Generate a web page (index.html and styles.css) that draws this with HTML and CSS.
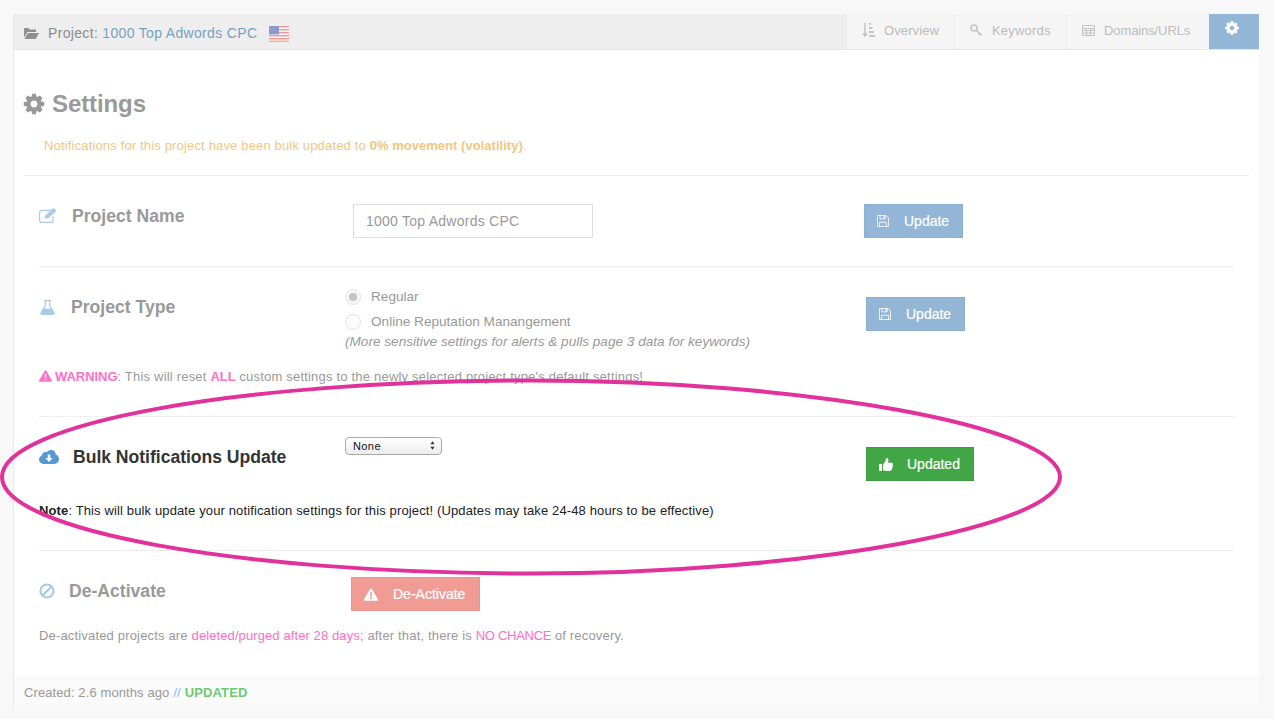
FILE: index.html
```html
<!DOCTYPE html>
<html lang="en">
<head>
<meta charset="utf-8">
<title>Project Settings</title>
<link rel="stylesheet" href="styles.css">
</head>
<body>
<svg class="defs" width="0" height="0" aria-hidden="true">
  <symbol id="i-cog" viewBox="0 0 1792 1792"><path fill-rule="evenodd" d="M1152 896q0-106-75-181t-181-75-181 75-75 181 75 181 181 75 181-75 75-181zm512-109v222q0 12-8 23t-20 13l-185 28q-19 54-39 91 35 50 107 138 10 12 10 25t-9 23q-27 37-99 108t-94 71q-12 0-26-9l-138-108q-44 23-91 38-16 136-29 186-7 28-36 28h-222q-14 0-24.500-8.500t-11.500-21.500l-28-184q-49-16-90-37l-141 107q-10 9-25 9-14 0-25-11-126-114-165-168-7-10-7-23 0-12 8-23 15-21 51-66.500t54-70.500q-27-50-41-99l-183-27q-13-2-21-12.500t-8-23.500v-222q0-12 8-23t19-13l186-28q14-46 39-92-40-57-107-138-10-12-10-24 0-10 9-23 26-36 98.500-107.500t94.500-71.500q13 0 26 10l138 107q44-23 91-38 16-136 29-186 7-28 36-28h222q14 0 24.500 8.500t11.500 21.500l28 184q49 16 90 37l142-107q9-9 24-9 13 0 25 10 129 119 165 170 7 8 7 22 0 12-8 23-15 21-51 66.500t-54 70.500q26 50 41 98l183 28q13 2 21 12.500t8 23.500z"/></symbol>
  <symbol id="i-warn" viewBox="0 0 16 14"><path fill-rule="evenodd" d="M8 0c.4 0 .7.2.9.5l7 12c.4.7-.1 1.500-.9 1.500H1c-.8 0-1.300-.8-.9-1.500l7-12C7.300.2 7.600 0 8 0zM7 4.500l.2 5h1.600l.2-5H7zM7 10.500V12.300h2V10.500H7z"/></symbol>
  <symbol id="i-save" viewBox="0 0 14 14"><path fill="none" stroke="currentColor" d="M.5.5h10l3 3v10H.5z"/><path fill="none" stroke="currentColor" d="M3.500.5v4h6v-4M3 13.500v-5h8v5"/><path fill="currentColor" d="M7.500 1.200h1.300v2.500H7.500z"/></symbol>
</svg>

<div class="panel">
  <header class="topbar">
    <div class="crumb">
      <svg class="ico-folder" viewBox="0 0 15 11" width="15" height="11"><path fill="#8f8f8f" d="M0 1c0-.6.4-1 1-1h3.500l1 1.500H11c.6 0 1 .4 1 1V4H3.500L0 9.500z"/><path fill="#8f8f8f" d="M3.800 5H15l-3.300 6H.5z"/></svg>
      <span>Project: <a class="link">1000 Top Adwords CPC</a></span>
      <svg class="flag" viewBox="0 0 20 16" width="20" height="16"><rect width="20" height="16" fill="#fff"/><g fill="#ee9a9a"><rect width="20" height="1.500"/><rect y="3" width="20" height="1.500"/><rect y="6" width="20" height="1.500"/><rect y="9" width="20" height="1.500"/><rect y="12" width="20" height="1.500"/></g><rect y="14.500" width="20" height="1.500" fill="#f0b48c"/><rect width="10" height="8.500" fill="#8e99cc"/></svg>
    </div>
    <nav class="tabs">
      <a class="tab tab-overview"><svg viewBox="0 0 13 14" width="13" height="14"><path fill="none" stroke="#c4c4c4" stroke-width="1.500" d="M3 0v12.500M.8 10.500 3 13l2.200-2.500"/><path fill="#c4c4c4" d="M7 0h2v2H7zM7 4h3.500v2H7zM7 8h5v2H7zM7 12h6v2H7z"/></svg>Overview</a>
      <a class="tab tab-keywords"><svg viewBox="0 0 13 13" width="13" height="13"><circle cx="4" cy="4" r="3" fill="none" stroke="#c4c4c4" stroke-width="1.600"/><path fill="none" stroke="#c4c4c4" stroke-width="1.600" d="M6 6l6 5.500M9.500 9.300 8.500 11"/></svg>Keywords</a>
      <a class="tab tab-domains"><svg viewBox="0 0 13 11" width="13" height="11"><path fill="none" stroke="#c4c4c4" d="M.5.500h12v10H.5zM.5 3.500h12M.5 5.500h12M.5 8h12M4.500 3.500v7M8.500 3.500v7"/></svg>Domains/URLs</a>
      <a class="tab tab-settings"><svg class="ico-tabcog" width="16" height="16"><use href="#i-cog"/></svg></a>
    </nav>
  </header>

  <main class="content">
    <h1 class="page-title"><svg class="ico-title" width="24" height="24"><use href="#i-cog"/></svg>Settings</h1>
    <p class="notice">Notifications for this project have been bulk updated to <b>0% movement (volatility)</b>.</p>

    <div class="rows">
      <section class="row row-name">
        <h2 class="label"><svg class="ico-label ico-edit" viewBox="0 0 18 15" width="18" height="15"><path fill="none" stroke="#a9cbe8" stroke-width="1.200" d="M14 8.500v3.700c0 1.200-.9 2.200-2.200 2.200H2.800C1.500 14.400.6 13.400.6 12.200V4.500c0-1.200.9-2.200 2.200-2.200H12"/><path fill="#a9cbe8" d="M5.500 10.500 6.300 7.500 13.800.6c.4-.4 1-.4 1.400 0l1.600 1.500c.4.4.4 1 0 1.400L9.300 10.300z"/></svg>Project Name</h2>
        <div class="control"><input class="text-input" type="text" value="1000 Top Adwords CPC"></div>
        <div class="action"><a class="btn btn-blue"><svg class="ico-btn ico-save" width="12" height="12"><use href="#i-save"/></svg>Update</a></div>
      </section>

      <section class="row row-type">
        <h2 class="label"><svg class="ico-label ico-flask" viewBox="0 0 15 15" width="15" height="15"><path fill="none" stroke="#a9cbe8" stroke-width="1.200" d="M4 .6h7M5.300.6v5L1 12.800c-.4.800.1 1.600 1 1.600h11c.9 0 1.400-.8 1-1.600L9.700 5.600v-5"/><path fill="#a9cbe8" d="M3.800 8.500h7.400L14.500 14H.5z"/></svg>Project Type</h2>
        <div class="control radios">
          <label class="radio-line"><input class="radio" type="radio" name="type" checked>Regular</label>
          <label class="radio-line"><input class="radio" type="radio" name="type">Online Reputation Manangement</label>
          <em class="hint">(More sensitive settings for alerts &amp; pulls page 3 data for keywords)</em>
        </div>
        <div class="action"><a class="btn btn-blue"><svg class="ico-btn ico-save" width="12" height="12"><use href="#i-save"/></svg>Update</a></div>
        <p class="row-note"><svg class="ico-warn" width="13" height="12"><use href="#i-warn"/></svg><b class="pink">WARNING</b>: This will reset <b class="pink">ALL</b> custom settings to the newly selected project type's default settings!</p>
      </section>

      <section class="row row-bulk">
        <h2 class="label label-dark"><svg class="ico-label ico-cloud" viewBox="0 0 20 14" width="20" height="14"><path fill="#5499d0" fill-rule="evenodd" d="M15.500 14H4.500C2 14 0 12 0 9.600 0 7.800 1.100 6.200 2.800 5.500 3 3.500 4.700 2 6.700 2c.5 0 1 .1 1.400.3C9 .9 10.500 0 12.200 0c2.500 0 4.500 2 4.600 4.500C18.700 5 20 6.900 20 9.300 20 12 18 14 15.500 14zM8.700 4.500v3.500H6.300L10 12l3.700-4h-2.400V4.500z"/></svg>Bulk Notifications Update</h2>
        <div class="control">
          <div class="select-wrap">
            <select class="select"><option>None</option></select>
            <svg class="select-arrows" viewBox="0 0 6 10" width="5" height="9"><path fill="#333" d="M3 0l2.500 3.500h-5zM3 10 .5 6.500h5z"/></svg>
          </div>
        </div>
        <div class="action"><a class="btn btn-green"><svg class="ico-btn ico-thumb" viewBox="0 0 14 13" width="14" height="13"><path fill="#fff" d="M0 6h3v7H0zM4 6.200c1.500-1 2.600-3 2.800-5C6.900.300 7.400 0 8 0c1 0 1.500 1 1.400 2.200L9 4.800h3.600c.8 0 1.400.6 1.400 1.400 0 .4-.2.700-.4 1 .2.300.3.600.3.900 0 .5-.3.900-.6 1.100.1.200.1.400.1.600 0 .6-.3 1-.8 1.200.1.800-.5 2-1.600 2H8c-1.500 0-2.500-.5-4-.8z"/></svg>Updated</a></div>
        <p class="row-note note-dark"><b>Note</b>: This will bulk update your notification settings for this project! (Updates may take 24-48 hours to be effective)</p>
      </section>

      <section class="row row-off">
        <h2 class="label"><svg class="ico-label ico-ban" viewBox="0 0 16 16" width="16" height="16"><circle cx="8" cy="8" r="6.500" fill="none" stroke="#a9cbe8" stroke-width="2.200"/><path stroke="#a9cbe8" stroke-width="2.200" d="M3.500 12.500l9-9"/></svg>De-Activate</h2>
        <div class="control"><a class="btn btn-red"><svg class="ico-btn ico-warn-btn" width="14" height="13"><use href="#i-warn"/></svg>De-Activate</a></div>
        <p class="row-note">De-activated projects are <span class="pink pink-long">deleted/purged after 28 days</span>; after that, there is <span class="pink pink-short">NO CHANCE</span> of recovery.</p>
      </section>
    </div>
  </main>

  <footer class="foot">Created: 2.6 months ago <span class="slashes">//</span> <b class="updated">UPDATED</b></footer>
</div>

<svg class="circle" viewBox="0 0 1274 719" width="1274" height="719" aria-hidden="true"><path d="M2 477C2 424 238 380.500 531 380.500C806 380.500 1060 427 1060 477C1060 527 806 573.500 531 573.500C238 573.500 2 530 2 477Z" fill="none" stroke="#e2319a" stroke-width="4"/></svg>
</body>
</html>
```

FILE: styles.css
```css
* { box-sizing: border-box; }
html, body { margin: 0; height: 100%; }
body {
  position: relative;
  height: 719px;
  overflow: hidden;
  padding: 14px 15px 0 13px;
  background: #f8f8f8;
  font-family: "Liberation Sans", Arial, sans-serif;
  font-size: 13px;
  color: #999;
}
.defs { position: absolute; }
.panel {
  height: 696px;
  display: flex;
  flex-direction: column;
  background: #fff;
  border: 1px solid #e8e8e8;
  border-top: 0;
  border-right: 0;
}
.topbar {
  height: 36px;
  flex: none;
  display: flex;
  justify-content: space-between;
  background: #eee;
  border-bottom: 1px solid #e6e6e6;
}
.crumb {
  display: flex;
  align-items: center;
  padding: 3px 0 0 10px;
  font-size: 14px;
  letter-spacing: 0.33px;
  color: #8a8a8a;
}
.ico-folder { margin-right: 9px; }
.link { color: #78a0c4; }
.flag { margin-left: 12px; margin-top: 1px; }
.tabs { display: flex; }
.tab {
  display: flex;
  align-items: center;
  height: 35px;
  padding: 0 15px 3px;
  gap: 9px;
  font-size: 13px;
  color: #bcbcbc;
  background: #f5f5f5;
  border-right: 1px solid #ececec;
}
.tab-overview { width: 108px; padding-left: 15px; letter-spacing: 0.1px; margin-left: 1px; }
.tab-keywords { width: 112px; padding-left: 15px; letter-spacing: 0.2px; }
.tab-domains { width: 142px; padding-left: 15px; gap: 9px; border-right: 0; letter-spacing: -0.1px; }
.tab-settings { width: 50px; padding: 0 0 8px 15px; background: #93b5d6; border-right: 0; }
.ico-tabcog { fill: #fff; }

.content { flex: 1; padding: 0 10px; }
.page-title {
  display: flex;
  align-items: center;
  gap: 6px;
  margin: 39px 0 0;
  height: 30px;
  font-size: 24px;
  font-weight: bold;
  letter-spacing: -0.1px;
  color: #999;
}
.ico-title { fill: #999; margin-left: -2px; width: 24px; }
.notice {
  margin: 16px 0 0;
  height: 20px;
  line-height: 21px;
  padding-left: 20px;
  color: #f2c67f;
  font-size: 13px;
  letter-spacing: 0.16px;
}
.notice b { letter-spacing: 0.03px; }
.rows { margin-top: 20px; border-top: 1px solid #eee; padding: 0 15px; }
.row {
  display: grid;
  grid-template-columns: 306px 519px 1fr;
  align-content: start;
  border-bottom: 1px solid #eee;
}
.row:last-child { border-bottom: 0; }
.row-name { height: 91px; padding-top: 28px; }
.row-type { height: 150px; padding-top: 17px; }
.row-bulk { height: 134px; padding-top: 20px; }
.row-off { height: 125px; padding-top: 26px; }

.label {
  display: flex;
  align-items: center;
  margin: 0;
  height: 24px;
  font-size: 17.6px;
  font-weight: bold;
  color: #999;
}
.label-dark { color: #333; letter-spacing: -0.03px; }
.ico-label { flex: none; }
.ico-edit { margin: -2px 15px 0 0; }
.ico-flask { margin: 0 16px 0 1px; }
.ico-cloud { margin-right: 14px; }
.ico-ban { margin: 0 14px 0 0; }
.row-type .label { margin-top: 11px; }
.row-bulk .label { margin-top: 8px; }
.row-off .label { margin-top: 2px; }

.text-input {
  display: block;
  margin-left: 8px;
  width: 240px;
  height: 34px;
  padding: 0 12px;
  border: 1px solid #ddd;
  background: #fff;
  font: 14px "Liberation Sans", Arial, sans-serif;
  letter-spacing: 0.25px;
  color: #999;
  outline: 0;
}
.radios { display: flex; flex-direction: column; font-size: 13.6px; }
.radio-line { display: flex; align-items: center; height: 25px; color: #999; }
.radio {
  appearance: none;
  flex: none;
  width: 16px;
  height: 16px;
  margin: 0 10px 0 0;
  border: 1px solid #e4e4e4;
  border-radius: 50%;
  background: #fcfcfc;
}
.radio:checked { background: radial-gradient(circle, #c2c6c9 0 4px, #f6f6f6 4.500px); }
.hint { font-size: 13.6px; line-height: 16px; color: #999; }

.btn {
  display: inline-flex;
  align-items: center;
  height: 34px;
  padding: 0 12px;
  border: 1px solid;
  font-size: 14px;
  white-space: nowrap;
  color: #fff;
  -webkit-text-stroke: 0.2px #fff;
}
.btn-blue { background: #93b5d6; border-color: #8cafd1; width: 99px; }
.btn-green { background: #41a646; border-color: #3b9c40; width: 108px; }
.btn-red { background: #f09b94; border-color: #eb938c; width: 129px; margin-left: 6px; }
.ico-btn { flex: none; margin-right: 15px; }
.ico-save { margin-right: 15px; }
.ico-thumb { margin-right: 14px; }
.ico-warn-btn { fill: #fff; margin: 0 15px 0 0; }
.row-type .action { margin-left: 2px; margin-top: 13px; }
.row-bulk .action { margin-left: 2px; margin-top: 10px; }

.row-note {
  grid-column: 1 / -1;
  margin: 0;
  font-size: 13px;
  line-height: 18px;
  color: #999;
}
.row-type .row-note { margin-top: 18px; letter-spacing: 0.2px; }
.row-type .row-note b { letter-spacing: -0.05px; }
.row-bulk .row-note { margin-top: 21px; letter-spacing: 0.13px; }
.row-off .row-note { margin-top: 16px; letter-spacing: 0.17px; }
.pink-long { letter-spacing: 0.1px; }
.pink-short { letter-spacing: -0.3px; }
.note-dark { color: #222; }
.pink { color: #ff6fc4; }
.ico-warn { fill: #ff6fc4; margin-right: 3px; vertical-align: -1px; }

.select-wrap { position: relative; width: 97px; height: 18px; }
.select {
  appearance: none;
  display: block;
  width: 97px;
  height: 18px;
  padding: 0 0 0 7px;
  border: 1px solid #a9a9a9;
  border-radius: 4px;
  background: linear-gradient(#fff, #ececec);
  font: 11px "Liberation Sans", Arial, sans-serif;
  letter-spacing: 0.4px;
  color: #111;
}
.select-arrows { position: absolute; right: 7px; top: 4px; }

.foot {
  height: 34px;
  flex: none;
  padding: 0 10px 2px;
  display: flex;
  align-items: center;
  gap: 4px;
  background: #fafafa;
  font-size: 13px;
  letter-spacing: 0.1px;
  color: #999;
}
.slashes { color: #8fb8f0; }
.updated { color: #6ec975; }

.circle { position: absolute; left: 0; top: 0; pointer-events: none; }
```
